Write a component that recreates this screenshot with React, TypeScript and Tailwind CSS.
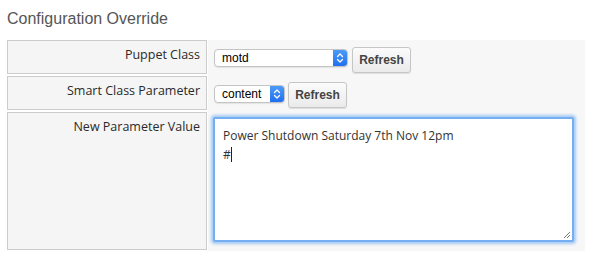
import React from 'react';

const SelectArrows: React.FC = () => (
  <svg width="8" height="12" viewBox="0 0 8 12" fill="none">
    <path d="M1.5 4.5 L4 2 L6.5 4.5" stroke="white" strokeWidth="1.3" strokeLinecap="round" strokeLinejoin="round" />
    <path d="M1.5 7.5 L4 10 L6.5 7.5" stroke="white" strokeWidth="1.3" strokeLinecap="round" strokeLinejoin="round" />
  </svg>
);

const MacSelect: React.FC<{ value: string; width: string }> = ({ value, width }) => (
  <div
    className={`${width} h-[18px] flex items-stretch rounded-[4px] border border-[#c4c4c4] bg-white shadow-[0_1px_1px_rgba(0,0,0,0.08)] overflow-hidden`}
  >
    <span className="flex-1 pl-[7px] text-[12px] leading-[16px] text-black font-['Liberation_Sans',Arial,sans-serif]">
      {value}
    </span>
    <span className="w-[14px] flex items-center justify-center bg-gradient-to-b from-[#4c9bf8] to-[#1f6ff0]">
      <SelectArrows />
    </span>
  </div>
);

const RefreshButton: React.FC = () => (
  <button className="w-[59px] h-[26px] rounded-[3px] border border-[#c6c6c6] bg-gradient-to-b from-[#fbfbfb] to-[#ebebeb] shadow-[0_1px_1px_rgba(0,0,0,0.1)] text-[12px] font-bold text-[#444] font-['Liberation_Sans',Arial,sans-serif]">
    Refresh
  </button>
);

const Label: React.FC<{ text: string; height: string }> = ({ text, height }) => (
  <div className={`${height} border border-[#cccccc] bg-[#f5f5f5] text-right pr-[6px] pt-[5px] text-[12.5px] leading-[18px] text-[#2a2a2a]`}>
    {text}
  </div>
);

export default function App() {
  return (
    <div className="w-[598px] h-[267px] bg-white font-['Open_Sans',sans-serif]">
      {/* Titre */}
      <div className="h-[40px] pl-[7px] pt-[9px] text-[16px] leading-[20px] text-[#555] font-['Liberation_Sans',Arial,sans-serif]">
        Configuration Override
      </div>

      <div className="ml-[7px] flex w-[578px]">
        {/* Libellés */}
        <div className="w-[200px] flex flex-col gap-[2px]">
          <Label text="Puppet Class" height="h-[34px]" />
          <Label text="Smart Class Parameter" height="h-[34px]" />
          <Label text="New Parameter Value" height="h-[138px]" />
        </div>

        {/* Champs */}
        <div className="ml-[1px] flex-1 bg-[#f7f7f7] pl-[6px] pb-[9px]">
          <div className="h-[36px] flex items-center">
            <MacSelect value="motd" width="w-[134px]" />
            <div className="ml-[4px] mt-[2px]">
              <RefreshButton />
            </div>
          </div>
          <div className="h-[36px] flex items-center">
            <MacSelect value="content" width="w-[71px]" />
            <div className="ml-[3px] mt-[1px]">
              <RefreshButton />
            </div>
          </div>
          <div className="relative mt-[5px] -ml-[1px] w-[361px] h-[125px] rounded-[2px] border-2 border-[#74aef3] bg-white shadow-[0_0_3px_2px_rgba(120,177,243,0.65)] pl-[8px] pt-[7px] text-[12px] leading-[19px] text-[#333]">
            <div>Power Shutdown Saturday 7th Nov 12pm</div>
            <div className="flex items-center">
              #<span className="inline-block w-[1px] h-[15px] bg-[#222]" />
            </div>
            <svg className="absolute right-[1px] bottom-[1px]" width="8" height="8" viewBox="0 0 8 8">
              <path d="M1 7 L7 1 M4 7 L7 4" stroke="#777" strokeWidth="1" />
            </svg>
          </div>
        </div>
      </div>
    </div>
  );
}
